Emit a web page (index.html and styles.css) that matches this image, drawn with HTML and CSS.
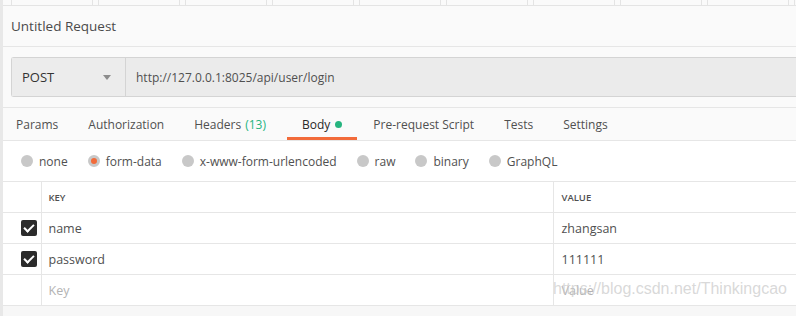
FILE: index.html
```html
<!DOCTYPE html>
<html lang="en">
<head>
    <meta charset="UTF-8">
    <meta name="viewport" content="width=device-width, initial-scale=1.0">
    <title>Untitled Request</title>
    <link rel="stylesheet" href="styles.css">
</head>
<body>
    <div class="page">
        <div class="tab-strip">
            <div class="tab-cell"></div>
            <div class="tab-cell"></div>
            <div class="tab-cell"></div>
            <div class="tab-cell"></div>
            <div class="tab-cell"></div>
            <div class="tab-cell"></div>
            <div class="tab-cell"></div>
            <div class="tab-cell"></div>
            <div class="tab-cell"></div>
            <div class="tab-cell"></div>
        </div>

        <div class="title-bar">Untitled Request</div>

        <div class="url-row">
            <div class="url-bar">
                <div class="method">
                    <span>POST</span>
                    <span class="caret"></span>
                </div>
                <div class="url">http://127.0.0.1:8025/api/user/login</div>
            </div>
        </div>

        <div class="req-tabs">
            <span class="req-tab">Params</span>
            <span class="req-tab">Authorization</span>
            <span class="req-tab">Headers <span class="count">(13)</span></span>
            <span class="req-tab active">Body <span class="dot"></span></span>
            <span class="req-tab">Pre-request Script</span>
            <span class="req-tab">Tests</span>
            <span class="req-tab">Settings</span>
        </div>

        <div class="body-types">
            <label class="radio"><span class="circle"></span>none</label>
            <label class="radio selected"><span class="circle"></span>form-data</label>
            <label class="radio"><span class="circle"></span>x-www-form-urlencoded</label>
            <label class="radio"><span class="circle"></span>raw</label>
            <label class="radio"><span class="circle"></span>binary</label>
            <label class="radio"><span class="circle"></span>GraphQL</label>
        </div>

        <table class="params">
            <tr class="head">
                <td class="check"></td>
                <td class="key">KEY</td>
                <td class="value">VALUE</td>
            </tr>
            <tr>
                <td class="check"><span class="box"></span></td>
                <td class="key">name</td>
                <td class="value">zhangsan</td>
            </tr>
            <tr>
                <td class="check"><span class="box"></span></td>
                <td class="key">password</td>
                <td class="value">111111</td>
            </tr>
            <tr class="empty">
                <td class="check"></td>
                <td class="key">Key</td>
                <td class="value">Value</td>
            </tr>
        </table>

        <div class="footer"></div>

        <div class="watermark">https://blog.csdn.net/Thinkingcao</div>
    </div>
</body>
</html>
```

FILE: styles.css
```css
body {
    margin: 0;
    font-family: "Open Sans", "Liberation Sans", sans-serif;
    color: #505050;
    background: #fafafa;
    overflow: hidden;
}

.page {
    position: relative;
    height: 316px;
    border-left: 3px solid #e8e8e8;
    background: #fafafa;
}

/* top tab strip */
.tab-strip {
    display: flex;
    gap: 5px;
    height: 5px;
    padding-left: 8px;
    border-bottom: 1px solid #e4e4e4;
    overflow: hidden;
}

.tab-cell {
    flex: 0 0 80px;
    border-left: 1px solid #e4e4e4;
    border-right: 1px solid #e4e4e4;
}

.title-bar {
    height: 40px;
    display: flex;
    align-items: center;
    padding-left: 8px;
    font-size: 13.5px;
    color: #4a4a4a;
    border-bottom: 1px solid #e6e6e6;
}

/* url bar */
.url-row {
    padding: 10px 0 10px 8px;
    border-bottom: 1px solid #e6e6e6;
}

.url-bar {
    display: flex;
    height: 38px;
    border: 1px solid #d4d4d4;
    border-right: none;
    border-radius: 3px 0 0 3px;
    background: #ebebeb;
}

.method {
    width: 114px;
    display: flex;
    align-items: center;
    justify-content: space-between;
    padding: 0 14px 0 10px;
    box-sizing: border-box;
    border-right: 1px solid #d4d4d4;
    font-size: 13px;
    color: #333;
    background: #ececec;
}

.caret {
    width: 0;
    height: 0;
    border-left: 4px solid transparent;
    border-right: 4px solid transparent;
    border-top: 5px solid #8c8c8c;
}

.url {
    display: flex;
    align-items: center;
    padding-left: 10px;
    font-size: 12px;
    color: #505050;
}

/* request tabs */
.req-tabs {
    display: flex;
    height: 32px;
    padding-left: 13px;
    border-bottom: 1px solid #e6e6e6;
    font-size: 12px;
}

.req-tab {
    display: flex;
    align-items: center;
    padding: 0 15px 0 0;
    margin-right: 15px;
    position: relative;
}

.req-tab.active {
    color: #282828;
    padding: 0 15px;
    margin-left: -9px;
    margin-right: 16px;
}

.req-tab.active::after {
    content: "";
    position: absolute;
    left: 0;
    right: 0;
    bottom: 0;
    height: 3px;
    background: #f26b3a;
}

.count {
    color: #26b47f;
    margin-left: 4px;
}

.dot {
    width: 7px;
    height: 7px;
    border-radius: 50%;
    background: #26b47f;
    margin-left: 5px;
}

/* body type radios */
.body-types {
    display: flex;
    align-items: center;
    height: 40px;
    padding-left: 18px;
    background: #fff;
    font-size: 12px;
}

.radio {
    display: flex;
    align-items: center;
    margin-right: 20px;
}

.circle {
    width: 12px;
    height: 12px;
    border-radius: 50%;
    background: #c8c8c8;
    margin-right: 6px;
    box-sizing: border-box;
}

.radio.selected .circle {
    border: 3px solid #c8c8c8;
    background: #f26b3a;
}

/* params table */
.params {
    width: 100%;
    border-collapse: collapse;
    background: #fff;
    font-size: 12.5px;
}

.params td {
    height: 30px;
    padding: 0;
    border-top: 1px solid #e6e6e6;
    border-bottom: 1px solid #e6e6e6;
}

.params .check {
    width: 38px;
    padding-left: 18px;
    box-sizing: border-box;
    border-right: 1px solid #e6e6e6;
}

.params .key {
    width: 504px;
    padding-left: 7px;
    border-right: 1px solid #e6e6e6;
}

.params .value {
    padding-left: 8px;
}

.params .head td {
    font-size: 9.5px;
    font-weight: 600;
    color: #505050;
}

.params .empty .key,
.params .empty .value {
    color: #b3b3b3;
}

.box {
    display: block;
    width: 16px;
    height: 16px;
    border-radius: 2px;
    background: #2b2b2b;
    position: relative;
}

.box::after {
    content: "";
    position: absolute;
    left: 5px;
    top: 2px;
    width: 4px;
    height: 8px;
    border: solid #fff;
    border-width: 0 2.5px 2.5px 0;
    transform: rotate(45deg);
}

.footer {
    height: 11px;
    background: #f7f7f7;
}

.watermark {
    position: absolute;
    left: 550px;
    top: 280px;
    font-family: "Liberation Sans", Arial, sans-serif;
    font-size: 16px;
    color: rgba(200, 200, 200, 0.7);
    white-space: nowrap;
}
```
